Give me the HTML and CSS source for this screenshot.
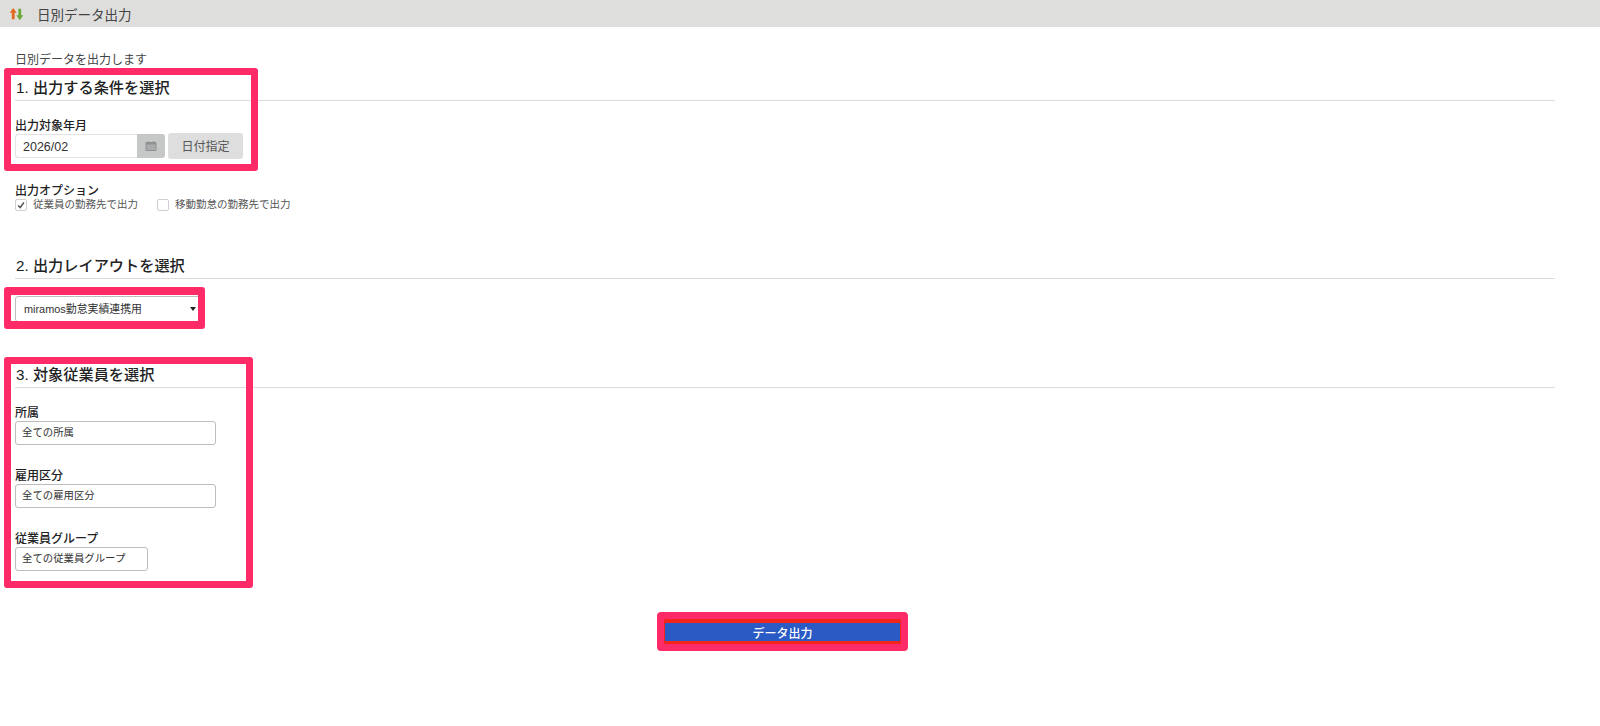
FILE: index.html
```html
<!doctype html>
<html lang="ja">
  <head>
    <meta charset="UTF-8" />
    <title>日別データ出力</title>
    <link rel="stylesheet" href="styles.css">
  </head>
  <body>
    <header class="title-bar">
      <svg class="title-icon" viewBox="0 0 16 16" preserveAspectRatio="none">
        <path d="M4.500 1 8.200 6.500H6V14H3V6.500H.8z" fill="#e2691f" />
        <path d="M11.500 15 7.800 9.500H10V2h3v7.500h2.200z" fill="#6aa83a" />
      </svg>
      <span class="title-text">日別データ出力</span>
    </header>

    <main class="content">
      <p class="intro">日別データを出力します</p>

      <section class="section section-period">
        <h2>1. 出力する条件を選択</h2>
        <div class="field field-first">
          <label>出力対象年月</label>
          <div class="date-row">
            <div class="date-input">2026/02</div>
            <div class="date-addon">
              <svg viewBox="0 0 12 12">
                <path d="M1 2.500h10v8H1z" fill="#a9acac" stroke="#8f9292" />
                <path d="M1 2.500h10v2H1z" fill="#8f9292" />
                <path d="M3.500 1v2M8.500 1v2" stroke="#8f9292" />
              </svg>
            </div>
            <button class="btn-date">日付指定</button>
          </div>
        </div>
        <div class="field field-options">
          <label>出力オプション</label>
          <div class="checks">
            <div class="check">
              <span class="box">
                <svg viewBox="0 0 12 12">
                  <path d="M2.500 6.500 5 9l4.500-6" fill="none" stroke="#555" stroke-width="1.800" />
                </svg>
              </span>
              従業員の勤務先で出力
            </div>
            <div class="check">
              <span class="box"></span>
              移動勤怠の勤務先で出力
            </div>
          </div>
        </div>
      </section>

      <section class="section section-layout">
        <h2>2. 出力レイアウトを選択</h2>
        <div class="select">miramos勤怠実績連携用<span class="caret"></span></div>
      </section>

      <section class="section section-staff">
        <h2>3. 対象従業員を選択</h2>
        <div class="field field-first">
          <label>所属</label>
          <div class="picker picker-wide">全ての所属</div>
        </div>
        <div class="field field-next">
          <label>雇用区分</label>
          <div class="picker picker-wide">全ての雇用区分</div>
        </div>
        <div class="field field-next">
          <label>従業員グループ</label>
          <div class="picker picker-narrow">全ての従業員グループ</div>
        </div>
      </section>

      <div class="submit-row">
        <button class="btn-submit">データ出力</button>
      </div>
    </main>

    <!-- red annotation frames drawn on top of the screen -->
    <div class="mark mark-period"></div>
    <div class="mark mark-layout"></div>
    <div class="mark mark-staff"></div>
    <div class="mark mark-submit"></div>
  </body>
</html>
```

FILE: styles.css
```css
:root {
  --mark: #ff2a68;
  --text: #222;
  --line: #dcdcdc;
  --field-border: #bdbdbd;
}

* {
  margin: 0;
  padding: 0;
  box-sizing: border-box;
}

body {
  position: relative;
  height: 726px;
  overflow: hidden;
  background: #fff;
  color: var(--text);
  font-family: "Liberation Sans", "Noto Sans CJK JP", sans-serif;
  font-size: 11px;
}

.title-bar {
  display: flex;
  align-items: center;
  height: 27px;
  padding-left: 9px;
  background: #dededc;
}

.title-icon {
  width: 15px;
  height: 14px;
  margin-right: 13px;
}

.title-text {
  font-size: 13.500px;
  color: #444;
}

.content {
  padding: 24px 45px 0 15px;
}

.intro {
  height: 18px;
  line-height: 18px;
  font-size: 12px;
  color: #444;
}

.section h2 {
  height: 25px;
  line-height: 24px;
  padding-left: 1px;
  border-bottom: 1px solid var(--line);
  font-size: 15.200px;
  font-weight: 500;
  color: #222;
}

.section-period {
  margin-top: 7px;
}

.section-layout {
  margin-top: 41px;
}

.section-staff {
  margin-top: 41px;
}

.field label {
  display: block;
  height: 15px;
  line-height: 14px;
  font-size: 12px;
  font-weight: 500;
  color: #222;
}

.field-first {
  margin-top: 18px;
}

.field-next {
  margin-top: 24px;
}

.field-options {
  margin-top: 25px;
}

.date-row {
  display: flex;
  align-items: center;
  margin-top: -1px;
}

.date-input {
  width: 122px;
  height: 24px;
  line-height: 24px;
  padding-left: 7px;
  border: 1px solid #e2e2e2;
  border-right: none;
  border-radius: 3px 0 0 3px;
  font-size: 12.500px;
  color: #333;
}

.date-addon {
  display: flex;
  align-items: center;
  justify-content: center;
  width: 28px;
  height: 24px;
  background: #c6c8c8;
  border-radius: 0 3px 3px 0;
}

.date-addon svg {
  width: 12px;
  height: 12px;
}

.btn-date {
  width: 75px;
  height: 26px;
  margin-left: 3px;
  padding-bottom: 2px;
  border: none;
  border-radius: 3px;
  background: #dedede;
  font-family: inherit;
  font-size: 12px;
  color: #555;
}

.checks {
  display: flex;
  gap: 19px;
}

.check {
  display: flex;
  align-items: flex-start;
  height: 14px;
  line-height: 11px;
  font-size: 10.500px;
  color: #555;
}

.box {
  display: block;
  width: 12px;
  height: 12px;
  margin: 0 6px 0 0;
  border: 1px solid #cfcfcf;
  border-radius: 2px;
}

.box svg {
  display: block;
  width: 10px;
  height: 10px;
}

.select {
  position: relative;
  width: 190px;
  height: 26px;
  line-height: 24px;
  margin-top: 17px;
  padding-left: 8px;
  border: 1px solid var(--field-border);
  border-radius: 3px;
  font-size: 10.900px;
  color: #333;
}

.caret {
  position: absolute;
  top: 10px;
  right: 8px;
  border-top: 4px solid #222;
  border-left: 3px solid transparent;
  border-right: 3px solid transparent;
}

.picker {
  height: 24px;
  line-height: 22px;
  padding-left: 6px;
  border: 1px solid var(--field-border);
  border-radius: 3px;
  font-size: 10.400px;
  color: #333;
}

.picker-wide {
  width: 201px;
}

.picker-narrow {
  width: 133px;
}

.submit-row {
  display: flex;
  justify-content: center;
  margin-top: 48px;
  padding-right: 5px;
}

.btn-submit {
  width: 237px;
  height: 25px;
  border: solid #f5241a;
  border-width: 4px 1px 3px;
  background: #2a5ac4;
  font-family: inherit;
  font-size: 12px;
  font-weight: 500;
  color: #fff;
}

.mark {
  position: absolute;
  border: 7px solid var(--mark);
  border-radius: 3px;
}

.mark-period {
  left: 4px;
  top: 68px;
  width: 254px;
  height: 103px;
}

.mark-layout {
  left: 4px;
  top: 287px;
  width: 201px;
  height: 42px;
  border-width: 8px 7px;
}

.mark-staff {
  left: 4px;
  top: 357px;
  width: 249px;
  height: 231px;
}

.mark-submit {
  left: 657px;
  top: 612px;
  width: 251px;
  height: 39px;
  border-radius: 4px;
}
```
